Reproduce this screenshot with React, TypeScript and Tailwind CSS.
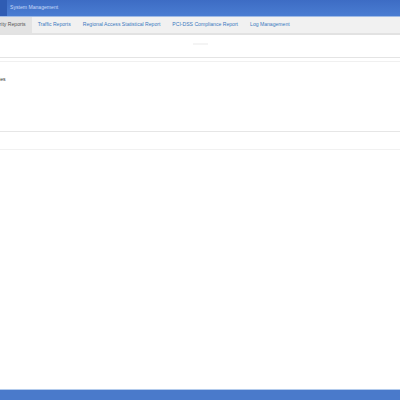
const tabs = [
  "Traffic Reports",
  "Regional Access Statistical Report",
  "PCI-DSS Compliance Report",
  "Log Management",
];

export default function App() {
  return (
    <div
      className="flex h-[400px] w-[400px] flex-col overflow-hidden bg-white"
      style={{ fontFamily: '"Liberation Sans", Arial, sans-serif' }}
    >
      {/* top nav */}
      <div className="flex h-[16px] shrink-0 items-stretch bg-gradient-to-b from-[#3d6cc4] to-[#4a7dd2]">
        <div className="w-[7px] bg-[#2f5cb3]" />
        <div className="flex items-center pl-[3px] text-[5.1px] text-[#c9dafa]">System Management</div>
      </div>
      <div className="h-px shrink-0 bg-[#9fbbe6]" />

      {/* tab bar */}
      <div className="flex h-[18px] shrink-0 items-stretch border-b-2 border-[#e2e2e2] bg-[#f1f1f1]">
        <div className="ml-[-18px] flex items-center bg-[#e3e3e3] px-[6px] text-[5.1px] text-[#555]">Security Reports</div>
        {tabs.map((t) => (
          <div key={t} className="flex items-center px-[6px] text-[5.1px] text-[#3a78c0]">
            {t}
          </div>
        ))}
      </div>

      {/* toolbar row */}
      <div className="flex h-[23px] shrink-0 items-start border-b border-[#e4e4e4] pt-[8px]">
        <div className="ml-[193px] h-[2px] w-[15px] bg-[#f4f4f4]" />
      </div>
      <div className="h-[4px] shrink-0 border-b border-[#f0f0f0]" />

      {/* content */}
      <div className="flex h-[70px] shrink-0 flex-col border-b border-[#e6e6e6]">
        <div className="mt-[14px] ml-[-19px] text-[5.1px] text-[#333]">Categories</div>
      </div>
      <div className="h-[18px] shrink-0 border-b border-[#f1f1f1]" />

      <div className="flex-1" />

      {/* footer */}
      <div className="h-px shrink-0 bg-[#b3cbec]" />
      <div className="h-[10px] shrink-0 bg-[#4a7acb]" />
    </div>
  );
}
